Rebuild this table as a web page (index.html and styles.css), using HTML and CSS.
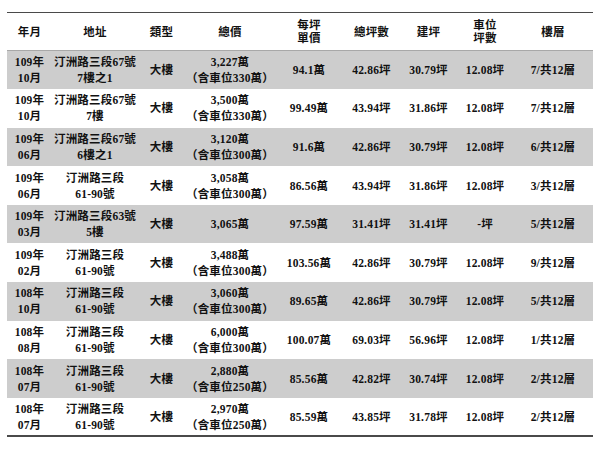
FILE: index.html
```html
<!DOCTYPE html>
<html lang="zh-Hant">
<head>
<meta charset="utf-8">
<link rel="stylesheet" href="styles.css">
</head>
<body>
<table class="deals">
  <colgroup>
    <col class="c-date"><col class="c-addr"><col class="c-type"><col class="c-total"><col class="c-unit"><col class="c-area"><col class="c-build"><col class="c-park"><col class="c-floor">
  </colgroup>
  <thead>
    <tr>
      <th>年月</th><th>地址</th><th>類型</th><th>總價</th><th class="tight">每坪<br>單價</th><th>總坪數</th><th>建坪</th><th class="tight">車位<br>坪數</th><th>樓層</th>
    </tr>
  </thead>
  <tbody>
    <tr class="alt"><td>109年<br>10月</td><td>汀洲路三段67號<br>7樓之1</td><td>大樓</td><td>3,227萬<br>（含車位330萬）</td><td>94.1萬</td><td>42.86坪</td><td>30.79坪</td><td>12.08坪</td><td>7/共12層</td></tr>
    <tr><td>109年<br>10月</td><td>汀洲路三段67號<br>7樓</td><td>大樓</td><td>3,500萬<br>（含車位330萬）</td><td>99.49萬</td><td>43.94坪</td><td>31.86坪</td><td>12.08坪</td><td>7/共12層</td></tr>
    <tr class="alt"><td>109年<br>06月</td><td>汀洲路三段67號<br>6樓之1</td><td>大樓</td><td>3,120萬<br>（含車位300萬）</td><td>91.6萬</td><td>42.86坪</td><td>30.79坪</td><td>12.08坪</td><td>6/共12層</td></tr>
    <tr><td>109年<br>06月</td><td>汀洲路三段<br>61-90號</td><td>大樓</td><td>3,058萬<br>（含車位300萬）</td><td>86.56萬</td><td>43.94坪</td><td>31.86坪</td><td>12.08坪</td><td>3/共12層</td></tr>
    <tr class="alt"><td>109年<br>03月</td><td>汀洲路三段63號<br>5樓</td><td>大樓</td><td>3,065萬</td><td>97.59萬</td><td>31.41坪</td><td>31.41坪</td><td>-坪</td><td>5/共12層</td></tr>
    <tr><td>109年<br>02月</td><td>汀洲路三段<br>61-90號</td><td>大樓</td><td>3,488萬<br>（含車位300萬）</td><td>103.56萬</td><td>42.86坪</td><td>30.79坪</td><td>12.08坪</td><td>9/共12層</td></tr>
    <tr class="alt"><td>108年<br>10月</td><td>汀洲路三段<br>61-90號</td><td>大樓</td><td>3,060萬<br>（含車位300萬）</td><td>89.65萬</td><td>42.86坪</td><td>30.79坪</td><td>12.08坪</td><td>5/共12層</td></tr>
    <tr><td>108年<br>08月</td><td>汀洲路三段<br>61-90號</td><td>大樓</td><td>6,000萬<br>（含車位300萬）</td><td>100.07萬</td><td>69.03坪</td><td>56.96坪</td><td>12.08坪</td><td>1/共12層</td></tr>
    <tr class="alt"><td>108年<br>07月</td><td>汀洲路三段<br>61-90號</td><td>大樓</td><td>2,880萬<br>（含車位250萬）</td><td>85.56萬</td><td>42.82坪</td><td>30.74坪</td><td>12.08坪</td><td>2/共12層</td></tr>
    <tr><td>108年<br>07月</td><td>汀洲路三段<br>61-90號</td><td>大樓</td><td>2,970萬<br>（含車位250萬）</td><td>85.59萬</td><td>43.85坪</td><td>31.78坪</td><td>12.08坪</td><td>2/共12層</td></tr>
  </tbody>
</table>
</body>
</html>
```

FILE: styles.css
```css
html, body {
  margin: 0;
  padding: 0;
  background: #ffffff;
}

body {
  padding: 12px 7px 0 7px;
  font-family: "Liberation Serif", "Noto Sans CJK TC", serif;
  font-weight: bold;
  font-size: 11.5px;
  letter-spacing: 0.2px;
  color: #111111;
}

.deals {
  width: 586px;
  border-collapse: collapse;
  table-layout: fixed;
  border-top: 1px solid #4a4a4a;
  border-bottom: 2px solid #4a4a4a;
}

.c-date { width: 45px; }
.c-addr { width: 86px; }
.c-type { width: 47px; }
.c-total { width: 90px; }
.c-unit { width: 68px; }
.c-area { width: 57px; }
.c-build { width: 57px; }
.c-park { width: 56px; }
.c-floor { width: 80px; }

.deals th,
.deals td {
  padding: 0;
  text-align: center;
  vertical-align: middle;
  line-height: 16px;
  white-space: nowrap;
}

.deals thead th {
  height: 37px;
  font-weight: bold;
  border-bottom: 1px solid #a8a8a8;
}

.deals thead th.tight {
  line-height: 13px;
}

.deals tbody tr {
  height: 38.6px;
}

.deals tbody tr.alt {
  background: #cdcdcd;
}
```
